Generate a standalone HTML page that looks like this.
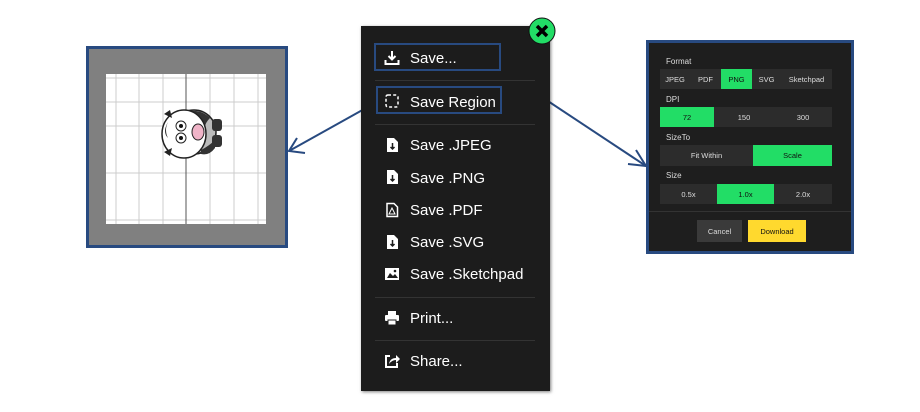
<!DOCTYPE html>
<html><head><style>
*{margin:0;padding:0;box-sizing:border-box}
body{width:920px;height:412px;background:#fff;position:relative;overflow:hidden;font-family:"Liberation Sans",sans-serif}
.abs{position:absolute}
.menu{left:361px;top:26px;width:189px;height:365px;background:#1c1c1c;box-shadow:1px 1px 3px rgba(0,0,0,.5)}
.item{position:absolute;left:49px;color:#fff;font-size:15px;line-height:18px;margin-top:2px}
.ic{position:absolute;left:23px;width:16px;height:16px;margin-top:1px}
.sep{position:absolute;left:14px;width:160px;height:1px;background:#333}
.hl{position:absolute;border:2px solid #284a80}
.rp{left:646px;top:40px;width:208px;height:214px;border:3px solid #284a80;background:#1e1e1e}
.lbl{position:absolute;left:17px;color:#ddd;font-size:8px}
.row{position:absolute;left:11px;width:172px;height:20px;display:flex;background:#2c2c2c}
.row div{color:#ddd;font-size:7.5px;display:flex;align-items:center;justify-content:center}
.on{background:#22dd66;color:#111!important}
</style></head><body>
<svg class="abs" style="left:0;top:0" width="920" height="412">
<line x1="498" y1="68" x2="646" y2="166" stroke="#284a80" stroke-width="2"/>
<polyline points="636,150 646,166 628,164" fill="none" stroke="#284a80" stroke-width="2"/>
<line x1="375" y1="103" x2="289" y2="151" stroke="#284a80" stroke-width="2"/>
<polyline points="297,138 289,151 305,153" fill="none" stroke="#284a80" stroke-width="2"/>
</svg>
<div class="abs" style="left:86px;top:46px;width:202px;height:202px;border:3px solid #284a80;background:#808080">
<svg class="abs" style="left:17px;top:25px" width="160" height="150">
<rect width="160" height="150" fill="#fff"/>
<g stroke="#ccc" stroke-width="1">
<line x1="10" y1="0" x2="10" y2="150"/><line x1="33" y1="0" x2="33" y2="150"/><line x1="57" y1="0" x2="57" y2="150"/><line x1="104" y1="0" x2="104" y2="150"/><line x1="128" y1="0" x2="128" y2="150"/><line x1="152" y1="0" x2="152" y2="150"/>
<line x1="0" y1="4" x2="160" y2="4"/><line x1="0" y1="28" x2="160" y2="28"/><line x1="0" y1="52" x2="160" y2="52"/><line x1="0" y1="99" x2="160" y2="99"/><line x1="0" y1="146" x2="160" y2="146"/></g>
<line x1="80" y1="0" x2="80" y2="150" stroke="#555"/>
<circle cx="88" cy="58" r="22" fill="#bbb" stroke="#222" stroke-width="1.5"/>
<path d="M80 38 q14 -4 24 6 q-8 8 -4 16 q-10 2 -20 -4z" fill="#333"/>
<path d="M95 76 q8 -4 14 -10 l0 8 q-6 8 -14 6z" fill="#333"/>
<rect x="106" y="45" width="10" height="12" rx="3" fill="#333"/><rect x="106" y="61" width="10" height="12" rx="3" fill="#333"/>
<ellipse cx="78" cy="60" rx="22" ry="24" fill="#fff" stroke="#222" stroke-width="1.5"/>
<path d="M62 48 q-4 8 0 16 q-6 -6 0 -16z" fill="#333"/>
<circle cx="75" cy="52" r="5" fill="#fff" stroke="#222"/><circle cx="75" cy="52" r="2" fill="#111"/>
<circle cx="75" cy="64" r="5" fill="#fff" stroke="#222"/><circle cx="75" cy="64" r="2" fill="#111"/>
<ellipse cx="92" cy="58" rx="6" ry="8" fill="#f0b4c8" stroke="#222"/>
<path d="M58 40 l6 -4 l2 8z M58 78 l6 4 l2 -8z" fill="#222"/>
</svg></div>
<div class="abs menu">
<div class="hl" style="left:13px;top:17px;width:127px;height:28px"></div>
<div class="hl" style="left:15px;top:60px;width:126px;height:28px"></div>
<svg class="ic" style="top:23px" viewBox="0 0 16 16"><path d="M8 1v8M4.5 6l3.5 3.5 3.5-3.5M1.5 10v4h13v-4" fill="none" stroke="#fff" stroke-width="2"/></svg>
<div class="item" style="top:22px">Save...</div>
<div class="sep" style="top:54px"></div>
<svg class="ic" style="top:66px" viewBox="0 0 16 16"><rect x="2" y="2" width="12" height="12" rx="2" fill="none" stroke="#fff" stroke-width="1.5" stroke-dasharray="3 2.2"/></svg>
<div class="item" style="top:66px">Save Region</div>
<div class="sep" style="top:98px"></div>
<svg class="ic" style="top:110px" viewBox="0 0 16 16"><path d="M3 1h7l4 4v10H3z" fill="#fff"/><path d="M8.5 6v6M6.5 10l2 2 2-2" stroke="#1c1c1c" stroke-width="1.5" fill="none"/></svg>
<div class="item" style="top:109px">Save .JPEG</div>
<svg class="ic" style="top:142px" viewBox="0 0 16 16"><path d="M3 1h7l4 4v10H3z" fill="#fff"/><path d="M8.5 6v6M6.5 10l2 2 2-2" stroke="#1c1c1c" stroke-width="1.5" fill="none"/></svg>
<div class="item" style="top:142px">Save .PNG</div>
<svg class="ic" style="top:175px" viewBox="0 0 16 16"><path d="M3 1.5h7l3.5 3.5v9.5H3z" fill="none" stroke="#fff" stroke-width="1.5"/><path d="M5 12l3-6 3 6z" fill="none" stroke="#fff" stroke-width="1"/></svg>
<div class="item" style="top:174px">Save .PDF</div>
<svg class="ic" style="top:207px" viewBox="0 0 16 16"><path d="M3 1h7l4 4v10H3z" fill="#fff"/><path d="M8.5 6v6M6.5 10l2 2 2-2" stroke="#1c1c1c" stroke-width="1.5" fill="none"/></svg>
<div class="item" style="top:206px">Save .SVG</div>
<svg class="ic" style="top:239px" viewBox="0 0 16 16"><rect x="1" y="2" width="14" height="12" fill="#fff"/><path d="M3 12l3-5 3 3 2-2 3 4z" fill="#1c1c1c"/><circle cx="11" cy="5" r="1.3" fill="#1c1c1c"/></svg>
<div class="item" style="top:238px">Save .Sketchpad</div>
<div class="sep" style="top:271px"></div>
<svg class="ic" style="top:283px" viewBox="0 0 16 16"><rect x="4" y="1" width="8" height="4" fill="#fff"/><rect x="1" y="5" width="14" height="6" rx="1" fill="#fff"/><rect x="4" y="10" width="8" height="5" fill="#fff" stroke="#1c1c1c"/></svg>
<div class="item" style="top:282px">Print...</div>
<div class="sep" style="top:314px"></div>
<svg class="ic" style="top:326px" viewBox="0 0 16 16"><path d="M6 3H2v11h11v-4" fill="none" stroke="#fff" stroke-width="2"/><path d="M5 11q1-6 7-6V2l4 4-4 4V7q-4 0-7 4z" fill="#fff"/></svg>
<div class="item" style="top:325px">Share...</div>
</div>
<svg class="abs" style="left:528px;top:17px" width="28" height="28"><circle cx="14" cy="14" r="13" fill="#22dd66" stroke="#111" stroke-width="1"/><path d="M9 9l10 10M19 9L9 19" stroke="#000" stroke-width="3.5"/></svg>
<div class="abs rp">
<div class="lbl" style="top:14px">Format</div>
<div class="row" style="top:26px"><div style="width:30px">JPEG</div><div style="width:31px">PDF</div><div class="on" style="width:31px">PNG</div><div style="width:29px">SVG</div><div style="width:51px">Sketchpad</div></div>
<div class="lbl" style="top:52px">DPI</div>
<div class="row" style="top:64px"><div class="on" style="width:54px">72</div><div style="width:60px">150</div><div style="width:58px">300</div></div>
<div class="lbl" style="top:90px">SizeTo</div>
<div class="row" style="top:102px;height:21px"><div style="width:93px">Fit Within</div><div class="on" style="width:79px">Scale</div></div>
<div class="lbl" style="top:128px">Size</div>
<div class="row" style="top:141px"><div style="width:57px">0.5x</div><div class="on" style="width:57px">1.0x</div><div style="width:58px">2.0x</div></div>
<div class="abs" style="left:0;top:168px;width:202px;height:1px;background:#333"></div>
<div class="abs" style="left:48px;top:177px;width:45px;height:22px;background:#3a3a3a;color:#ddd;font-size:7.5px;display:flex;align-items:center;justify-content:center">Cancel</div>
<div class="abs" style="left:99px;top:177px;width:58px;height:22px;background:#ffd92e;color:#111;font-size:7.5px;display:flex;align-items:center;justify-content:center">Download</div>
</div>
</body></html>
